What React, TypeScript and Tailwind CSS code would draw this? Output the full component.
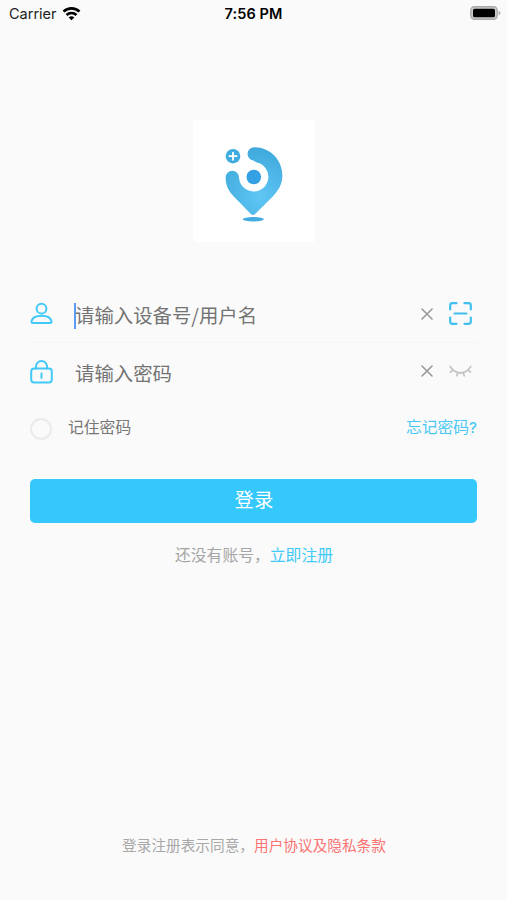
import { useState } from "react";

function StatusBar() {
  return (
    <div className="grid h-7 grid-cols-3 items-center pr-[6px] pl-[9px] font-['Inter','Liberation_Sans',sans-serif] text-[14.5px] text-[#222]">
      <div className="flex items-center gap-[5px]">
        <span>Carrier</span>
        <svg width="19" height="14" viewBox="0 0 20 15" fill="none" stroke="#000" strokeWidth="2.9">
          <path d="M1.5 5a12 12 0 0 1 17 0" />
          <path d="M4.7 8.6a7.6 7.6 0 0 1 10.6 0" />
          <path d="M10 14.200 7 11.200a4.4 4.4 0 0 1 6 0z" fill="#000" stroke="none" />
        </svg>
      </div>
      <span className="-ml-[3px] text-center font-semibold tracking-[0.1px] whitespace-nowrap text-black">7:56 PM</span>
      <svg className="-mt-[2px] justify-self-end" width="31" height="14" viewBox="0 0 31 14">
        <rect x="0.8" y="0.8" width="26.4" height="12.4" rx="3.6" fill="#ccc" stroke="#aaa" strokeWidth="1.4" />
        <rect x="3" y="2.7" width="22" height="8.6" rx="1.6" fill="#000" />
        <path d="M28.6 4.8c2.4.8 2.4 3.6 0 4.4z" fill="#aaa" />
      </svg>
    </div>
  );
}

function Logo() {
  return (
    <svg className="rounded-[3px] bg-white" width="122" height="122" viewBox="0 0 122 122">
      <defs>
        <radialGradient id="pin" gradientUnits="userSpaceOnUse" cx="67" cy="76" r="48">
          <stop offset="0" stopColor="#5fc6f4" />
          <stop offset="1" stopColor="#3fa9dc" />
        </radialGradient>
      </defs>
      <circle cx="40" cy="36.2" r="7.3" fill="#40abdf" />
      <path d="M40 32.6v7.2M36.4 36.2h7.2" stroke="#fff" strokeWidth="1.8" strokeLinecap="round" />
      <path
        d="M61.5 27.3C77 27.3 89.4 40 89.4 55.6c0 8.500-4 15-9.400 20.600L62.400 93.700q-2.400 2.400-4.800 0L41.500 77.200C36 71.500 32.600 66 32.600 57.500a6.700 6.700 0 0 1 13.400 0 14.700 14.700 0 1 0 17-15.300l-2-1.500a6.700 6.700 0 0 1 .5-13.400z"
        fill="url(#pin)"
      />
      <circle cx="60.800" cy="57" r="7.300" fill="#35a0e4" />
      <ellipse cx="60.300" cy="99.300" rx="10.700" ry="2.200" fill="#43abdf" />
    </svg>
  );
}

function UserIcon() {
  return (
    <svg width="23" height="23" viewBox="0 0 23 23" fill="none" stroke="#41c9f8" strokeWidth="2">
      <circle cx="11.500" cy="6.700" r="4.900" />
      <path d="M3 21c-1.200 0-1.700-.6-1.500-1.700C2.300 15.700 6 13.700 11.500 13.700s9.200 2 10 5.600c.2 1.100-.3 1.700-1.500 1.700z" />
    </svg>
  );
}

function LockIcon() {
  return (
    <svg className="mt-[2px]" width="23" height="24" viewBox="0 0 23 24" fill="none" stroke="#41c9f8" strokeWidth="2" strokeLinecap="round">
      <rect x="1.200" y="8.500" width="20.600" height="14" rx="3" />
      <path d="M6 8.500V6.500a5.500 5.500 0 0 1 11 0v2M11.500 13.500v4.500" />
    </svg>
  );
}

function ScanIcon() {
  return (
    <svg width="23" height="23" viewBox="0 0 23 23" fill="none" stroke="#3fc0ef" strokeWidth="2.200" strokeLinecap="round">
      <path d="M1.200 7.500v-4a2.300 2.300 0 0 1 2.300-2.300h4M15.500 1.200h4a2.300 2.300 0 0 1 2.300 2.300v4M21.800 15.500v4a2.300 2.300 0 0 1-2.300 2.300h-4M7.500 21.800h-4a2.300 2.300 0 0 1-2.300-2.300v-4M5.500 11.500h12" />
    </svg>
  );
}

function EyeClosedIcon() {
  return (
    <svg className="mt-[2px]" width="23" height="13" viewBox="0 0 23 13" fill="none" stroke="#c4c4c4" strokeWidth="1.700" strokeLinecap="round">
      <path d="M1.200 1.500c5.400 8.400 15.200 8.400 20.600 0M4 4.800 1.500 7.200M8.800 7.500l-1 3.300M14.200 7.500l1 3.300M19 4.800l2.500 2.400" />
    </svg>
  );
}

function ClearIcon() {
  return (
    <svg width="12" height="12" viewBox="0 0 12 12" stroke="#999" strokeWidth="1.600" strokeLinecap="round">
      <path d="M1 1l10 10M11 1 1 11" />
    </svg>
  );
}

export default function App() {
  const [remember, setRemember] = useState(false);

  return (
    <main className="flex h-[900px] w-full flex-col bg-[#fafafa] font-['Noto_Sans_CJK_SC',sans-serif]">
      <StatusBar />

      <div className="mt-[92px] flex justify-center">
        <Logo />
      </div>

      <div className="mx-[30px] mt-[43px]">
        <div className="flex h-[58px] items-center border-b border-[#f5f5f5]">
          <UserIcon />
          <div className="ml-[21px] flex flex-1 items-center">
            <span className="mt-[5px] h-[26px] w-[2px] bg-[#5a9df0]" />
            <span className="-ml-[1px] pt-[2px] text-[19.400px] leading-7 text-[#737373]">
              请输入设备号/用户名
            </span>
          </div>
          <ClearIcon />
          <div className="mr-[5px] ml-[16px]">
            <ScanIcon />
          </div>
        </div>

        <div className="flex h-[56px] items-center border-b border-[#f8f8f8]">
          <LockIcon />
          <span className="ml-[22px] flex-1 pt-[4px] text-[19.400px] leading-7 text-[#737373]">
            请输入密码
          </span>
          <ClearIcon />
          <div className="mr-[5px] ml-[16px]">
            <EyeClosedIcon />
          </div>
        </div>

        <div className="mt-[14px] flex h-[28px] items-center justify-between text-[15.800px] leading-6">
          <button className="flex items-center gap-[16px]" onClick={() => setRemember(!remember)}>
            <span
              className={
                remember
                  ? "mt-[4px] size-[22px] rounded-full border-2 border-[#35c8fc] bg-[#35c8fc]"
                  : "mt-[4px] size-[22px] rounded-full border-2 border-[#ebebeb]"
              }
            />
            <span className="text-[#777]">记住密码</span>
          </button>
          <a className="text-[#49c8f4]">
            忘记密码<span className="font-['Inter',sans-serif] text-[15px] font-medium">?</span>
          </a>
        </div>

        <button className="mt-[37.500px] block h-[44.500px] w-full rounded-[5px] bg-[#35c8fc] pb-[4px] pl-[1px] text-[19.400px] leading-7 text-white">
          登录
        </button>

        <p className="mt-[20px] ml-[1px] text-center text-[15.800px] leading-6 text-[#a5a5a5]">
          还没有账号，<a className="text-[#41c9f8]">立即注册</a>
        </p>
      </div>

      <p className="mt-auto mb-[43.500px] ml-[1px] text-center text-[14.670px] leading-6 text-[#a8a8a8]">
        登录注册表示同意，<a className="text-[#fb7474]">用户协议及隐私条款</a>
      </p>
    </main>
  );
}
